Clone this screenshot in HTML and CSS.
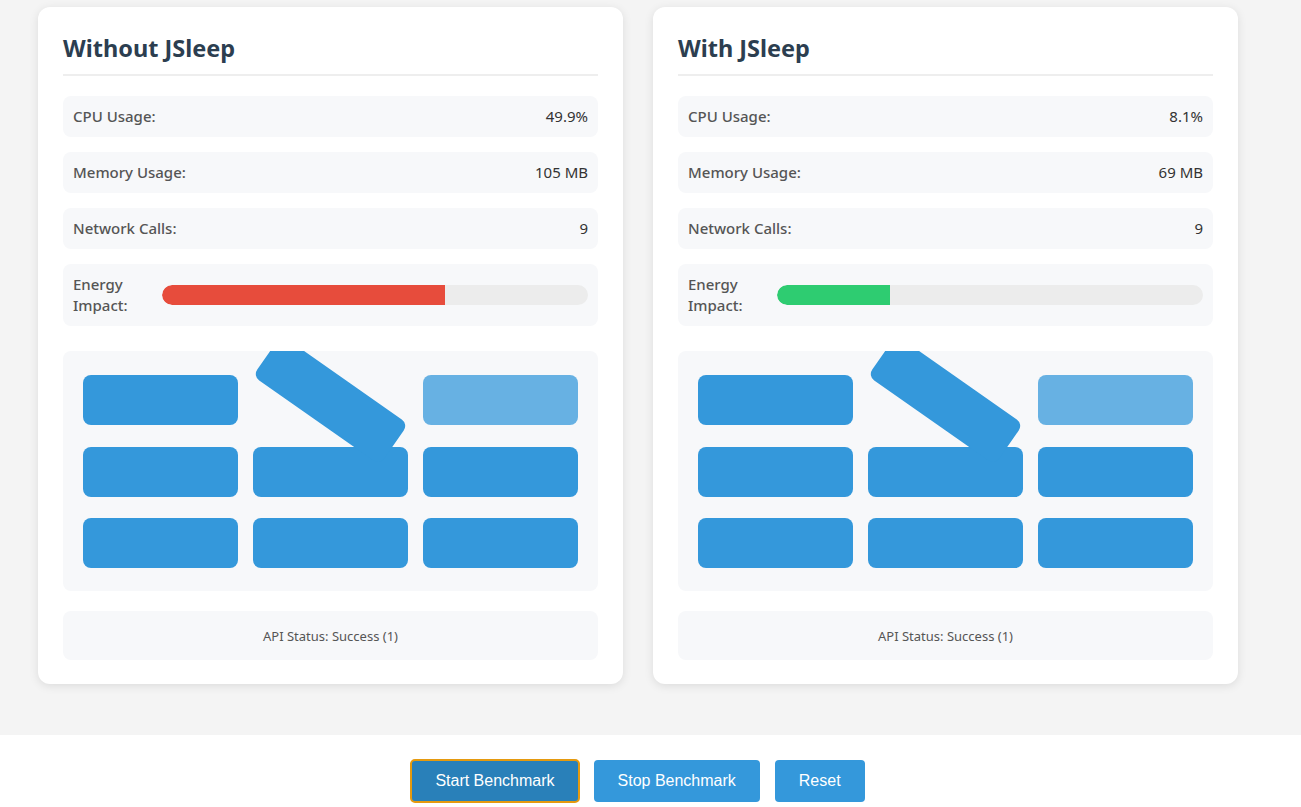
FILE: index.html
```html
<!DOCTYPE html>
<html lang="en">
<head>
<meta charset="utf-8">
<title>JSleep Benchmark</title>
<link rel="stylesheet" href="styles.css">
</head>
<body>
<main class="stage">
  <div class="cards">
    <section class="card">
      <h2 class="card-title">Without JSleep</h2>
      <div class="metric"><span class="metric-label">CPU Usage:</span><span class="metric-value">49.9%</span></div>
      <div class="metric"><span class="metric-label">Memory Usage:</span><span class="metric-value">105 MB</span></div>
      <div class="metric"><span class="metric-label">Network Calls:</span><span class="metric-value">9</span></div>
      <div class="metric energy">
        <span class="metric-label energy-label">Energy Impact:</span>
        <div class="bar"><div class="bar-fill bar-red" style="width:66.4%"></div></div>
      </div>
      <div class="tiles">
        <div class="tile"></div>
        <div class="tile tile-spin"></div>
        <div class="tile tile-faded"></div>
        <div class="tile"></div>
        <div class="tile"></div>
        <div class="tile"></div>
        <div class="tile"></div>
        <div class="tile"></div>
        <div class="tile"></div>
      </div>
      <div class="status">API Status: Success (1)</div>
    </section>
    <section class="card">
      <h2 class="card-title">With JSleep</h2>
      <div class="metric"><span class="metric-label">CPU Usage:</span><span class="metric-value">8.1%</span></div>
      <div class="metric"><span class="metric-label">Memory Usage:</span><span class="metric-value">69 MB</span></div>
      <div class="metric"><span class="metric-label">Network Calls:</span><span class="metric-value">9</span></div>
      <div class="metric energy">
        <span class="metric-label energy-label">Energy Impact:</span>
        <div class="bar"><div class="bar-fill bar-green" style="width:26.5%"></div></div>
      </div>
      <div class="tiles">
        <div class="tile"></div>
        <div class="tile tile-spin"></div>
        <div class="tile tile-faded"></div>
        <div class="tile"></div>
        <div class="tile"></div>
        <div class="tile"></div>
        <div class="tile"></div>
        <div class="tile"></div>
        <div class="tile"></div>
      </div>
      <div class="status">API Status: Success (1)</div>
    </section>
  </div>
</main>
<footer class="controls">
  <div class="controls-inner">
    <button class="btn btn-active">Start Benchmark</button>
    <button class="btn">Stop Benchmark</button>
    <button class="btn">Reset</button>
  </div>
</footer>
</body>
</html>
```
FILE: styles.css
```css
* { box-sizing: border-box; }

html, body {
  margin: 0;
  padding: 0;
}

body {
  background: #f4f4f4;
  font-family: "Segoe UI", "Noto Sans", "Open Sans", sans-serif;
  color: #333;
  height: 807px;
  overflow: hidden;
}

.stage {
  padding: 7px 0 0 38px;
  height: 735px;
}

.cards {
  display: flex;
  gap: 30px;
  width: 1200px;
}

.card {
  flex: 0 0 585px;
  background: #fff;
  border-radius: 12px;
  box-shadow: 0 2px 10px rgba(0, 0, 0, 0.1);
  padding: 25px 25px 24px;
  display: flex;
  flex-direction: column;
}

.card-title {
  margin: 0 0 20px;
  font-size: 23.5px;
  line-height: 33px;
  font-weight: 700;
  color: #2c3e50;
  padding-bottom: 9px;
  border-bottom: 2px solid #eee;
}

.metric {
  display: flex;
  align-items: center;
  justify-content: space-between;
  background: #f7f8fa;
  border-radius: 8px;
  padding: 10px 10px;
  margin-bottom: 15px;
  font-size: 15px;
  line-height: 21px;
}

.metric-label {
  color: #555;
  font-weight: 500;
}

.metric-value {
  color: #333;
}

.energy {
  justify-content: flex-start;
  margin-bottom: 25px;
}

.energy-label {
  width: 80px;
  flex: 0 0 80px;
  margin-right: 9px;
}

.bar {
  flex: 1;
  height: 20px;
  background: #ececec;
  border-radius: 10px;
  overflow: hidden;
}

.bar-fill {
  height: 100%;
  border-radius: 10px 0 0 10px;
}

.bar-red { background: #e74c3c; }
.bar-green { background: #2ecc71; }

.tiles {
  display: grid;
  grid-template-columns: repeat(3, 155px);
  grid-template-rows: repeat(3, 50px);
  column-gap: 15px;
  row-gap: 21.5px;
  padding: 24px 20px 23px;
  background: #f7f8fa;
  border-radius: 8px;
  overflow: hidden;
  height: 240px;
  margin-bottom: 20px;
}

.tile {
  background: #3498db;
  border-radius: 8px;
}

.tile-spin {
  transform: rotate(35deg);
}

.tile-faded {
  opacity: 0.74;
}

.status {
  background: #f7f8fa;
  border-radius: 8px;
  height: 49px;
  display: flex;
  align-items: center;
  justify-content: center;
  font-size: 13px;
  color: #555;
}

.controls {
  background: #fff;
  height: 72px;
}

.controls-inner {
  width: 1200px;
  margin-left: 38px;
  padding-top: 25px;
  display: flex;
  justify-content: center;
  gap: 15px;
}

.btn {
  font-family: "Liberation Sans", Arial, sans-serif;
  font-size: 16px;
  line-height: 18px;
  color: #fff;
  background: #3498db;
  border: none;
  border-radius: 4px;
  padding: 12px 24px;
  height: 42px;
  cursor: pointer;
}

.btn-active {
  background: #2980b9;
  outline: 2px solid #e59a0f;
  outline-offset: -1px;
}
```
